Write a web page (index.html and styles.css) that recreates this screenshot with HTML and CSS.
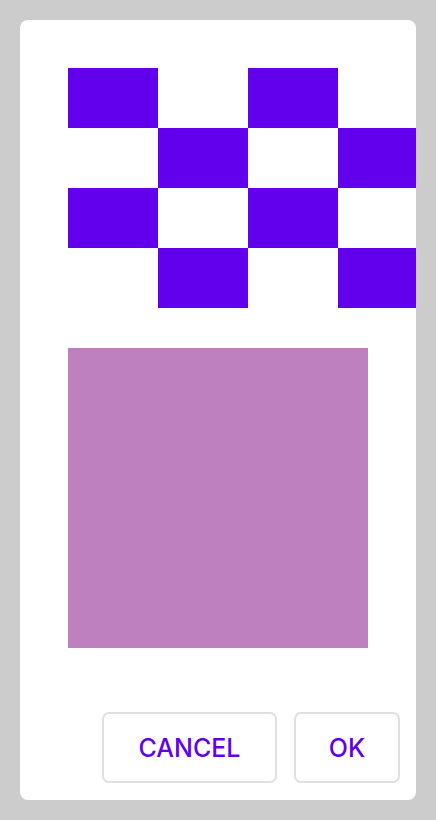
FILE: index.html
```html
<!DOCTYPE html>
<html>
<head>
<meta charset="utf-8">
<link rel="stylesheet" href="styles.css">
</head>
<body>
<div class="card">
  <div class="checker">
    <div class="cell on"></div><div class="cell"></div><div class="cell on"></div><div class="cell"></div>
    <div class="cell"></div><div class="cell on"></div><div class="cell"></div><div class="cell on"></div>
    <div class="cell on"></div><div class="cell"></div><div class="cell on"></div><div class="cell"></div>
    <div class="cell"></div><div class="cell on"></div><div class="cell"></div><div class="cell on"></div>
  </div>
  <div class="swatch"></div>
  <div class="actions">
    <button class="btn btn-cancel">CANCEL</button>
    <button class="btn btn-ok">OK</button>
  </div>
</div>
</body>
</html>
```
FILE: styles.css
```css
html, body {
  margin: 0;
  padding: 0;
  background: #cccccc;
}
body {
  padding: 20px;
  width: 436px;
  height: 820px;
  box-sizing: border-box;
  font-family: Inter, "Liberation Sans", sans-serif;
}
.card {
  width: 396px;
  height: 780px;
  box-sizing: border-box;
  background: #ffffff;
  border-radius: 8px;
  overflow: hidden;
  padding: 48px 16px 17px 48px;
  display: flex;
  flex-direction: column;
}
.checker {
  display: grid;
  grid-template-columns: repeat(4, 90px);
  grid-template-rows: repeat(4, 60px);
  width: 360px;
  flex: none;
}
.cell.on {
  background: #6200ee;
}
.swatch {
  width: 300px;
  height: 300px;
  margin-top: 40px;
  background: #bf80bf;
  flex: none;
}
.actions {
  margin-top: auto;
  display: flex;
  justify-content: flex-end;
  gap: 17px;
}
.btn {
  height: 71px;
  box-sizing: border-box;
  border: 2px solid #e0e0e0;
  border-radius: 7px;
  background: #ffffff;
  color: #6200ee;
  font-family: Inter, "Liberation Sans", sans-serif;
  font-weight: 500;
  font-size: 25px;
  padding: 0;
  text-align: center;
}
.btn-cancel {
  width: 175px;
}
.btn-ok {
  width: 106px;
}
```
